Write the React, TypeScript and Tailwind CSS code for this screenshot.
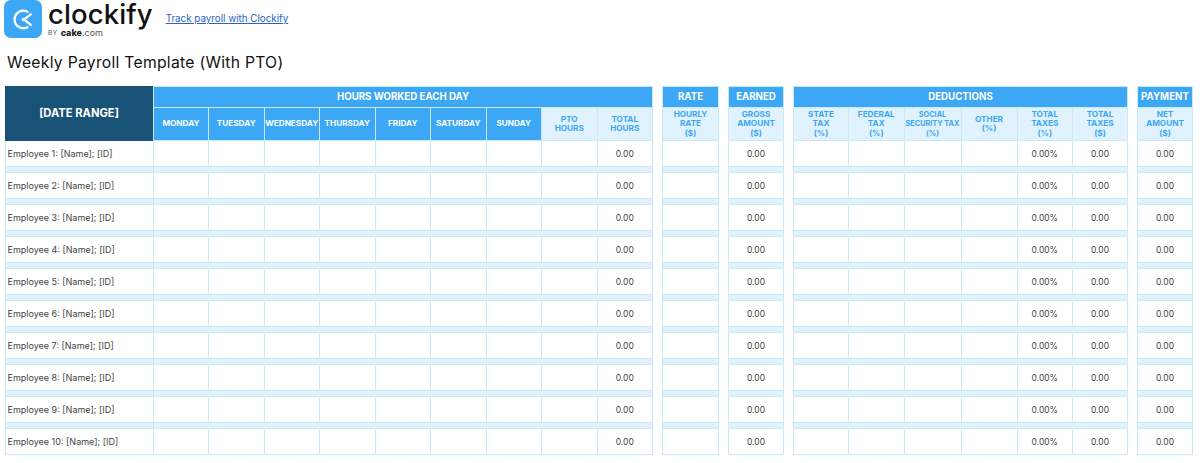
const employees = Array.from({ length: 10 }, (_, i) => `Employee ${i + 1}: [Name]; [ID]`);

type Col = { label: string[]; width: string; value?: string; dark?: boolean; small?: boolean };

const days = ["MONDAY", "TUESDAY", "WEDNESDAY", "THURSDAY", "FRIDAY", "SATURDAY", "SUNDAY"];

const hours: Col[] = [
  ...days.map((d, i) => ({ label: [d], width: i === 0 ? "w-[56px]" : "w-[55.5px]", dark: true })),
  { label: ["PTO", "HOURS"], width: "w-[55.5px]" },
  { label: ["TOTAL", "HOURS"], width: "w-[55.5px]", value: "0.00" },
];

const deductions: Col[] = [
  { label: ["STATE", "TAX", "(%)"], width: "w-[56px]" },
  { label: ["FEDERAL", "TAX", "(%)"], width: "w-[55.5px]" },
  { label: ["SOCIAL", "SECURITY TAX", "(%)"], width: "w-[57px]", small: true },
  { label: ["OTHER", "(%)"], width: "w-[56px]" },
  { label: ["TOTAL", "TAXES", "(%)"], width: "w-[55.5px]", value: "0.00%" },
  { label: ["TOTAL", "TAXES", "($)"], width: "w-[55px]", value: "0.00" },
];

function Logo() {
  return (
    <div className="flex h-[38px] w-[38px] shrink-0 items-center justify-center rounded-[7px] bg-[#3ba7f5]">
      <svg viewBox="0 0 24 24" className="h-[25px] w-[25px]" fill="none" stroke="#ffffff" strokeWidth="2.2" strokeLinecap="round">
        <path d="M15.8 4.6a8.4 8.4 0 1 0 0 14.8" />
        <path d="M19 7 13.9 10.9" />
        <path d="M14 13.2 19 17.2" />
        <circle cx="11.8" cy="12" r="1.6" fill="#ffffff" stroke="none" />
      </svg>
    </div>
  );
}

function Group({ title, cols, width }: { title: string; cols: Col[]; width: string }) {
  return (
    <div className={`flex flex-col ${width}`}>
      <div className="flex h-[22px] items-center justify-center border border-[#c9e8f8] bg-[#3ba7f5] text-[9.7px] font-bold text-white">
        {title}
      </div>
      <div className="flex h-[33px]">
        {cols.map((c) => (
          <div
            key={c.label.join(" ")}
            className={`flex shrink-0 flex-col items-center justify-center border-b border-r border-[#c9e8f8] text-center font-bold leading-[9.5px] first:border-l ${c.width} ${
              c.dark ? "bg-[#3ba7f5] text-white" : "bg-[#dff2fd] text-[#3ba7f5]"
            } ${c.small ? "text-[7.3px]" : "text-[8.2px]"}`}
          >
            {c.label.map((l) => (
              <span key={l} className="whitespace-nowrap">
                {l}
              </span>
            ))}
          </div>
        ))}
      </div>
      {employees.map((e, i) => (
        <div key={e} className="flex flex-col">
          <div className="flex h-[26px]">
            {cols.map((c) => (
              <div
                key={c.label.join(" ")}
                className={`flex shrink-0 items-center justify-center border-b border-r border-[#c9e8f8] pt-[1px] text-[8.5px] text-[#444444] first:border-l ${c.width}`}
              >
                {c.value}
              </div>
            ))}
          </div>
          {i < 9 && <div className="h-[6px] border-b border-x border-[#c9e8f8] bg-[#dff2fd]" />}
        </div>
      ))}
    </div>
  );
}

export default function App() {
  return (
    <div className="h-[463px] w-[1200px] overflow-hidden bg-white font-['Inter',sans-serif]">
      <div className="flex h-[39px] items-start pl-[4px]">
        <Logo />
        <div className="ml-[6px] flex flex-col">
          <span className="text-[27.5px] font-medium leading-[28px] tracking-[0.1px] text-[#111111]">clockify</span>
          <span className="flex items-center gap-[3px] text-[6.5px] leading-[10px] tracking-[0.5px] text-[#555555]">
            BY
            <span className="text-[9px] tracking-normal text-[#555555]">
              <b className="font-extrabold text-[#222222]">cake</b>.com
            </span>
          </span>
        </div>
        <a href="#" className="ml-[13px] mt-[12px] whitespace-nowrap text-[9.8px] leading-[14px] text-[#2b62c4] underline">
          Track payroll with Clockify
        </a>
      </div>
      <h1 className="ml-[7px] mt-[13px] text-[15.7px] font-normal leading-[22px] tracking-[0.28px] text-[#111111]">
        Weekly Payroll Template (With PTO)
      </h1>
      <div className="ml-[5px] mt-[12px] flex">
        <div className="flex w-[148px] shrink-0 flex-col">
          <div className="flex h-[55px] items-center justify-center bg-[#185377] text-[11.2px] font-bold text-white">
            [DATE RANGE]
          </div>
          {employees.map((e, i) => (
            <div key={e} className="flex flex-col">
              <div className="flex h-[26px] items-center border-b border-l border-[#c9e8f8] pl-[1.5px] text-[9px] text-[#444444]">
                {e}
              </div>
              {i < 9 && <div className="h-[6px] border-b border-l border-[#c9e8f8] bg-[#dff2fd]" />}
            </div>
          ))}
        </div>
        <Group title="HOURS WORKED EACH DAY" cols={hours} width="w-[500px]" />
        <div className="ml-[9px]">
          <Group title="RATE" cols={[{ label: ["HOURLY", "RATE", "($)"], width: "w-[57px]" }]} width="w-[57px]" />
        </div>
        <div className="ml-[9px]">
          <Group title="EARNED" cols={[{ label: ["GROSS", "AMOUNT", "($)"], width: "w-[56px]", value: "0.00" }]} width="w-[56px]" />
        </div>
        <div className="ml-[9px]">
          <Group title="DEDUCTIONS" cols={deductions} width="w-[335px]" />
        </div>
        <div className="ml-[9px]">
          <Group title="PAYMENT" cols={[{ label: ["NET", "AMOUNT", "($)"], width: "w-[56px]", value: "0.00" }]} width="w-[56px]" />
        </div>
      </div>
    </div>
  );
}
